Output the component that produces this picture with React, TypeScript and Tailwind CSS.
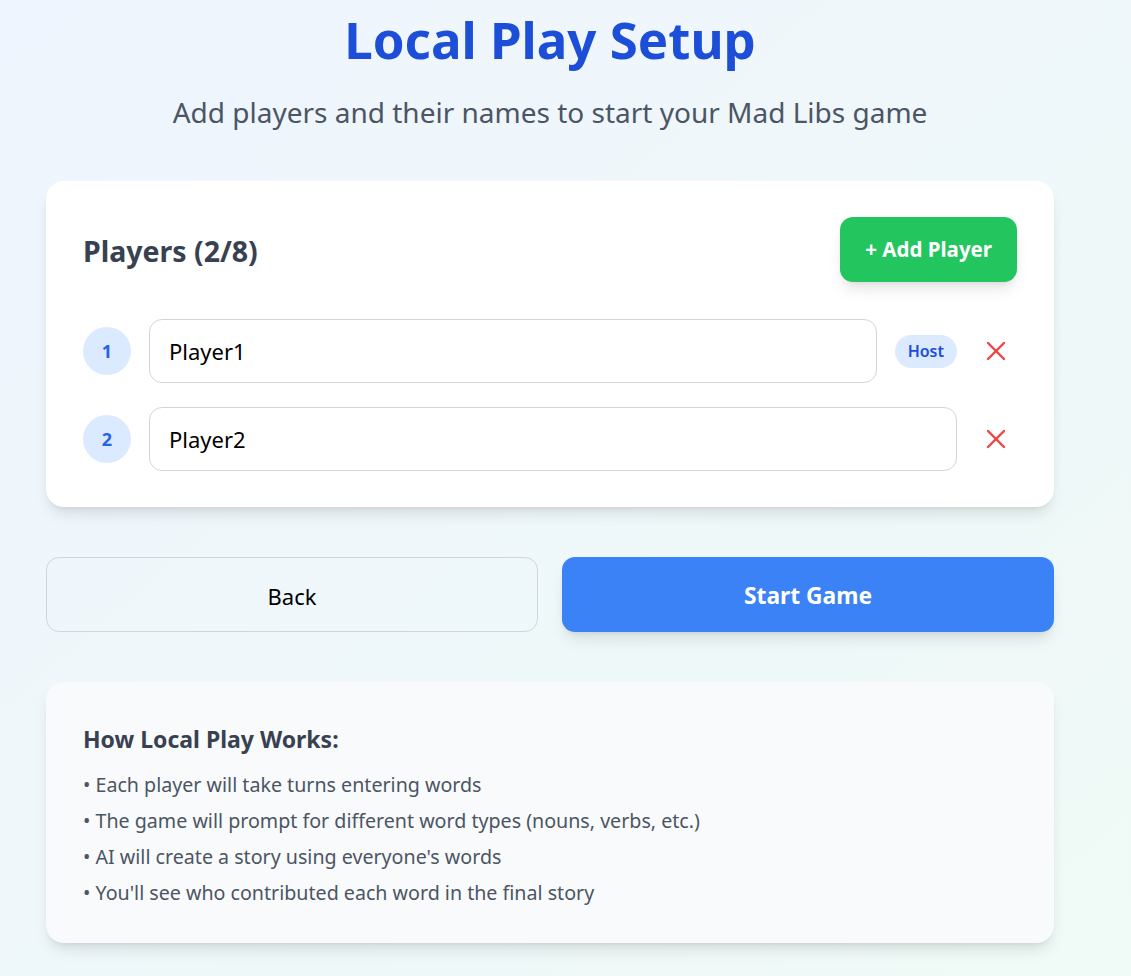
import React from "react";

const font = { fontFamily: '"Segoe UI", "Noto Sans", "Open Sans", sans-serif' };

function XIcon() {
  return (
    <svg width="20" height="20" viewBox="0 0 20 20" fill="none" stroke="#ef4444" strokeWidth="2.4" strokeLinecap="round">
      <line x1="2" y1="2" x2="18" y2="18" />
      <line x1="18" y1="2" x2="2" y2="18" />
    </svg>
  );
}

function PlayerRow({ n, name, host }: { n: number; name: string; host?: boolean }) {
  return (
    <div className="flex items-center gap-[18px]">
      <div className="w-[48px] h-[48px] rounded-full bg-[#dbeafe] text-[#2563eb] font-bold text-[18px] flex items-center justify-center shrink-0">
        {n}
      </div>
      <input
        defaultValue={name}
        className="flex-1 min-w-0 h-[64px] border border-[#d1d5db] rounded-[13px] px-[19px] text-[22px] text-black bg-white outline-none"
        style={font}
      />
      {host && (
        <span className="bg-[#dbeafe] text-[#1d4ed8] text-[16px] font-semibold px-[13px] h-[33px] flex items-center rounded-full">
          Host
        </span>
      )}
      <button className="w-[42px] h-[42px] flex items-center justify-center shrink-0">
        <XIcon />
      </button>
    </div>
  );
}

export default function App() {
  return (
    <div className="min-h-screen bg-gradient-to-br from-[#eef5fe] to-[#f0faf6]" style={font}>
      <div className="max-w-[1100px] px-[46px] pt-[12px] pb-[32px]">
        <h1 className="text-center text-[51px] leading-[54px] font-bold text-[#1d4ed8]">Local Play Setup</h1>
        <p className="text-center text-[28px] leading-[36px] text-[#4b5563] mt-[28px]">
          Add players and their names to start your Mad Libs game
        </p>

        <div className="mt-[51px] bg-white rounded-[18px] shadow-lg px-[37px] py-[36px]">
          <div className="flex items-center justify-between mb-[37px]">
            <h2 className="text-[28.5px] font-bold text-[#374151] mt-[4px]">Players (2/8)</h2>
            <button className="bg-[#22c55e] text-white font-bold text-[20.5px] h-[65px] px-[25px] rounded-[13px] shadow-lg">
              + Add Player
            </button>
          </div>
          <div className="flex flex-col gap-[24px]">
            <PlayerRow n={1} name="Player1" host />
            <PlayerRow n={2} name="Player2" />
          </div>
        </div>

        <div className="mt-[50px] grid grid-cols-2 gap-[24px]">
          <button className="h-[75px] pt-[3px] border border-[#d1d5db] rounded-[13px] text-[22px] text-black">Back</button>
          <button className="h-[75px] pt-[3px] bg-[#3b82f6] rounded-[13px] text-[22.8px] font-bold text-white shadow-lg">
            Start Game
          </button>
        </div>

        <div className="mt-[50px] bg-[#f9fafb] rounded-[18px] shadow-lg px-[37px] pt-[36px] pb-[34px]">
          <h3 className="text-[23px] leading-[31px] font-bold text-[#374151] mt-[6px] mb-[14px]">How Local Play Works:</h3>
          <ul className="flex flex-col gap-[4.5px] text-[19.65px] leading-[31.5px] text-[#4b5563]">
            <li>• Each player will take turns entering words</li>
            <li>• The game will prompt for different word types (nouns, verbs, etc.)</li>
            <li>• AI will create a story using everyone's words</li>
            <li>• You'll see who contributed each word in the final story</li>
          </ul>
        </div>
      </div>
    </div>
  );
}
